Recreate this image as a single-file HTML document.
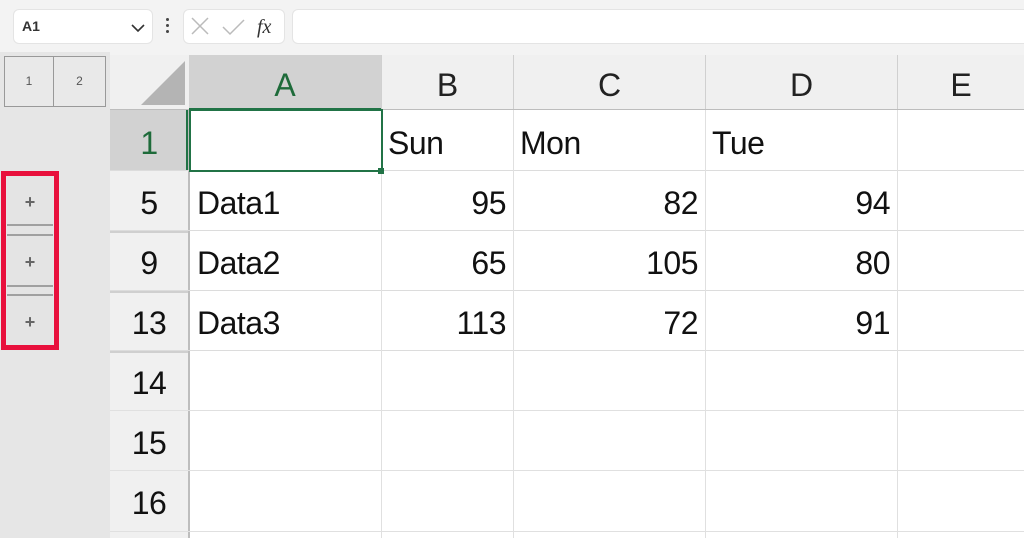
<!DOCTYPE html>
<html><head><style>
*{margin:0;padding:0;box-sizing:border-box}
body{width:1024px;height:538px;overflow:hidden;background:#f3f3f3;font-family:"Liberation Sans",sans-serif;position:relative}
.a{position:absolute}
.t{position:absolute;font-size:32px;color:#111;line-height:62px;white-space:nowrap;letter-spacing:-0.5px}
.r{text-align:right}
.h{font-size:32px;color:#222;text-align:center;line-height:60px}
</style></head><body>
<div class="a" style="left:13px;top:9px;width:140px;height:35px;background:#fff;border-radius:6px;border:1px solid #e4e4e4"></div>
<div class="a" style="left:22px;top:18px;font-size:14px;font-weight:bold;color:#333">A1</div>
<svg class="a" style="left:130px;top:22px" width="16" height="12"><path d="M2 3 L8 9 L14 3" stroke="#333" stroke-width="1.6" fill="none"/></svg>
<div class="a" style="left:166px;top:18px;width:3px;height:3px;background:#444;border-radius:2px"></div>
<div class="a" style="left:166px;top:24px;width:3px;height:3px;background:#444;border-radius:2px"></div>
<div class="a" style="left:166px;top:30px;width:3px;height:3px;background:#444;border-radius:2px"></div>
<div class="a" style="left:183px;top:9px;width:102px;height:35px;background:#fff;border-radius:6px;border:1px solid #e4e4e4"></div>
<svg class="a" style="left:190px;top:16px" width="90" height="22"><path d="M2 2 L18 18 M18 2 L2 18" stroke="#bbb" stroke-width="1.5"/><path d="M33 11 L40 18 L54 4" stroke="#bbb" stroke-width="1.5" fill="none"/><text x="67" y="17" font-family="Liberation Serif" font-style="italic" font-size="20" fill="#333">fx</text></svg>
<div class="a" style="left:292px;top:9px;width:740px;height:35px;background:#fff;border-radius:6px;border:1px solid #e4e4e4"></div>
<div class="a" style="left:0;top:52px;width:110px;height:486px;background:#e6e6e6"></div>
<div class="a" style="left:4px;top:56px;width:50px;height:51px;border:1px solid #999;background:#e9e9e9;font-size:12px;color:#555;text-align:center;line-height:49px">1</div>
<div class="a" style="left:54px;top:56px;width:52px;height:51px;border:1px solid #999;border-left:none;background:#e9e9e9;font-size:12px;color:#555;text-align:center;line-height:49px">2</div>
<div class="a" style="left:110px;top:55px;width:914px;height:55px;background:#f0f0f0"></div>
<svg class="a" style="left:140px;top:60px" width="46" height="46"><path d="M45 1 L45 45 L1 45 Z" fill="#b4b4b4"/></svg>
<div class="a h" style="left:189px;top:55px;width:192px;height:55px;background:#d2d2d2;color:#1e6b3a;border-bottom:2px solid #217346">A</div>
<div class="a h" style="left:381px;top:55px;width:132px;height:55px;border-left:1px solid #d0d0d0">B</div>
<div class="a h" style="left:513px;top:55px;width:192px;height:55px;border-left:1px solid #d0d0d0">C</div>
<div class="a h" style="left:705px;top:55px;width:192px;height:55px;border-left:1px solid #d0d0d0">D</div>
<div class="a h" style="left:897px;top:55px;width:127px;height:55px;border-left:1px solid #d0d0d0">E</div>
<div class="a" style="left:110px;top:109px;width:914px;height:1px;background:#bdbdbd"></div>
<div class="a" style="left:110px;top:110px;width:80px;height:428px;background:#f0f0f0;border-right:2px solid #bdbdbd"></div>
<div class="a" style="left:110px;top:110px;width:78px;height:60px;background:#d2d2d2;border-right:2px solid #217346"></div>
<div class="a" style="left:190px;top:110px;width:834px;height:428px;background:#fff"></div>
<div class="a" style="left:110px;top:170px;width:914px;height:1px;background:#dcdcdc"></div>
<div class="a" style="left:110px;top:230px;width:914px;height:1px;background:#dcdcdc"></div>
<div class="a" style="left:110px;top:290px;width:914px;height:1px;background:#dcdcdc"></div>
<div class="a" style="left:110px;top:350px;width:914px;height:1px;background:#dcdcdc"></div>
<div class="a" style="left:110px;top:231px;width:78px;height:2px;background:#cfcfcf"></div>
<div class="a" style="left:110px;top:291px;width:78px;height:2px;background:#cfcfcf"></div>
<div class="a" style="left:110px;top:351px;width:78px;height:2px;background:#cfcfcf"></div>
<div class="a" style="left:110px;top:410px;width:914px;height:1px;background:#e0e0e0"></div>
<div class="a" style="left:110px;top:470px;width:914px;height:1px;background:#e0e0e0"></div>
<div class="a" style="left:110px;top:531px;width:914px;height:1px;background:#e0e0e0"></div>
<div class="a" style="left:381px;top:110px;width:1px;height:428px;background:#e0e0e0"></div>
<div class="a" style="left:513px;top:110px;width:1px;height:428px;background:#e0e0e0"></div>
<div class="a" style="left:705px;top:110px;width:1px;height:428px;background:#e0e0e0"></div>
<div class="a" style="left:897px;top:110px;width:1px;height:428px;background:#e0e0e0"></div>
<div class="a" style="left:189px;top:109px;width:194px;height:63px;border:2px solid #217346"></div>
<div class="a" style="left:378px;top:168px;width:6px;height:6px;background:#217346"></div>
<div class="t" style="left:110px;top:112px;width:78px;text-align:center;color:#1e6b3a">1</div>
<div class="t" style="left:110px;top:172px;width:78px;text-align:center">5</div>
<div class="t" style="left:110px;top:232px;width:78px;text-align:center">9</div>
<div class="t" style="left:110px;top:292px;width:78px;text-align:center">13</div>
<div class="t" style="left:110px;top:352px;width:78px;text-align:center">14</div>
<div class="t" style="left:110px;top:412px;width:78px;text-align:center">15</div>
<div class="t" style="left:110px;top:472px;width:78px;text-align:center">16</div>
<div class="t" style="left:388px;top:112px">Sun</div>
<div class="t" style="left:520px;top:112px">Mon</div>
<div class="t" style="left:712px;top:112px">Tue</div>
<div class="t" style="left:197px;top:172px">Data1</div>
<div class="t" style="left:197px;top:232px">Data2</div>
<div class="t" style="left:197px;top:292px">Data3</div>
<div class="t r" style="left:381px;top:172px;width:125px">95</div>
<div class="t r" style="left:513px;top:172px;width:185px">82</div>
<div class="t r" style="left:705px;top:172px;width:185px">94</div>
<div class="t r" style="left:381px;top:232px;width:125px">65</div>
<div class="t r" style="left:513px;top:232px;width:185px">105</div>
<div class="t r" style="left:705px;top:232px;width:185px">80</div>
<div class="t r" style="left:381px;top:292px;width:125px">113</div>
<div class="t r" style="left:513px;top:292px;width:185px">72</div>
<div class="t r" style="left:705px;top:292px;width:185px">91</div>
<div class="a" style="left:7px;top:175px;width:46px;height:172px;background:#e4e4e4"></div>
<div class="a" style="left:7px;top:224px;width:46px;height:2px;background:#a0a0a0"></div>
<div class="a" style="left:7px;top:234px;width:46px;height:2px;background:#a0a0a0"></div>
<div class="a" style="left:7px;top:285px;width:46px;height:2px;background:#a0a0a0"></div>
<div class="a" style="left:7px;top:294px;width:46px;height:2px;background:#a0a0a0"></div>
<div class="a" style="left:7px;top:192px;width:46px;text-align:center;font-size:18px;color:#666;font-weight:bold">+</div>
<div class="a" style="left:7px;top:252px;width:46px;text-align:center;font-size:18px;color:#666;font-weight:bold">+</div>
<div class="a" style="left:7px;top:312px;width:46px;text-align:center;font-size:18px;color:#666;font-weight:bold">+</div>
<div class="a" style="left:1px;top:171px;width:58px;height:179px;border:5px solid #e8103c"></div>
</body></html>
